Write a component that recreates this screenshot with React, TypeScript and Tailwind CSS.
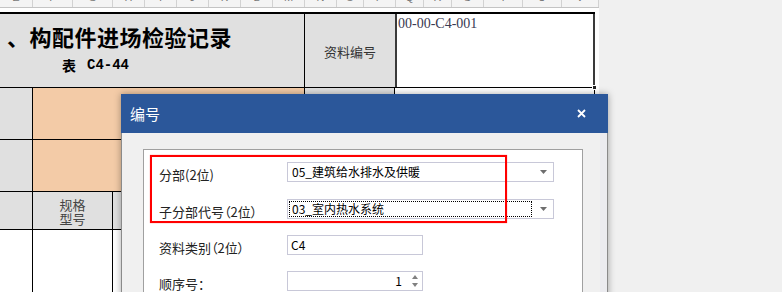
import React from "react";

const cols = [
  { l: "E", w: "w-[33px]" },
  { l: "F", w: "w-[40px]" },
  { l: "G", w: "w-[40px]" },
  { l: "H", w: "w-[32px]" },
  { l: "I", w: "w-[32px]" },
  { l: "J", w: "w-[32px]" },
  { l: "K", w: "w-[32px]" },
  { l: "L", w: "w-[32px]" },
  { l: "M", w: "w-[32px]" },
  { l: "N", w: "w-[32px]" },
  { l: "O", w: "w-[27px]" },
  { l: "P", w: "w-[32px]" },
  { l: "Q", w: "w-[28px]" },
  { l: "R", w: "w-[28px]" },
  { l: "S", w: "w-[32px]" },
  { l: "T", w: "w-[39px]" },
  { l: "U", w: "w-[39px]" },
  { l: "V", w: "w-[37px]" },
];

const cjk = "font-['Noto_Sans_CJK_SC','Noto_Sans',sans-serif]";

function Caret() {
  return (
    <svg width="7" height="4" viewBox="0 0 7 4" className="shrink-0">
      <path d="M0 0h7L3.5 4z" fill="#6e6e6e" />
    </svg>
  );
}

function Combo({ value, focused }: { value: string; focused?: boolean }) {
  return (
    <div className="w-[267px] h-[20px] border border-[#c8c8d8] bg-white flex items-center pl-[1px] pr-[6px]">
      <div
        className={`flex-1 h-[16px] flex items-center pl-[2px] mr-[8px] ${
          focused ? "border border-dotted border-black" : "border border-transparent"
        }`}
      >
        <span className="text-[12px] leading-none text-black">{value}</span>
      </div>
      <Caret />
    </div>
  );
}

function Row({ label, children }: { label: string; children: React.ReactNode }) {
  return (
    <div className="flex items-center h-[20px] shrink-0">
      <span className="w-[128px] pt-[4px] text-[13px] leading-none text-[#222] [font-feature-settings:'palt']">
        {label}
      </span>
      {children}
    </div>
  );
}

export default function App() {
  return (
    <div className={`relative w-[782px] h-[292px] overflow-hidden bg-[#f0f0f0] ${cjk}`}>
      {/* sheet */}
      <div className="w-[599px] h-[292px] bg-white flex flex-col overflow-hidden">
        <div className="flex shrink-0 h-[8px] bg-[#f4f4f4] border-b border-[#c4c4c4] overflow-hidden">
          {cols.map((c) => (
            <div
              key={c.l}
              className={`${c.w} shrink-0 border-r border-[#d2d2d2] text-center text-[11px] leading-[11px] text-[#777] -mt-[8px] font-['Liberation_Sans',sans-serif]`}
            >
              {c.l}
            </div>
          ))}
        </div>
        <div className="h-[4px] shrink-0 bg-white" />

        <div className="w-[595px] shrink-0 border-t-2 border-black flex flex-col">
          {/* title row */}
          <div className="flex shrink-0 h-[74px] border-b border-black">
            <div className="w-[305px] shrink-0 bg-[#e0e0e0] border-r border-black flex flex-col overflow-hidden">
              <div className="mt-[11px] ml-[7px] text-[22px] leading-[22px] font-bold tracking-[0.5px] text-black whitespace-nowrap">
                、构配件进场检验记录
              </div>
              <div className="mt-[10px] ml-[62px] flex items-center h-[15px] font-bold text-black whitespace-nowrap">
                <span className="text-[14px] leading-none">表</span>
                <span className="ml-[11px] text-[14px] leading-none font-['Liberation_Mono',monospace]">C4-44</span>
              </div>
            </div>
            <div className="w-[90px] shrink-0 bg-[#e0e0e0] flex items-center justify-center">
              <span className="text-[13px] leading-none text-[#333] pt-[2px]">资料编号</span>
            </div>
            <div className="relative w-[200px] shrink-0 bg-white border-x-2 border-[#3a3a3a]">
              <div className="pl-[1px] pt-[3px] text-[14px] leading-[14px] text-[#3a3a52] font-['Liberation_Serif',serif]">
                00-00-C4-001
              </div>
              <div className="absolute -right-[4px] -bottom-[3px] w-[5px] h-[5px] bg-[#222] border border-white" />
            </div>
          </div>

          {/* peach rows */}
          {[0, 1].map((i) => (
            <div key={i} className="flex shrink-0 h-[52px] border-b border-black">
              <div className="w-[33px] shrink-0 bg-[#e0e0e0] border-r border-black" />
              <div className="w-[272px] shrink-0 bg-[#f3cba7] border-r border-black" />
              <div className="w-[90px] shrink-0 bg-[#e0e0e0] border-r border-black" />
              <div className="w-[200px] shrink-0 bg-white border-r border-black" />
            </div>
          ))}

          {/* header row */}
          <div className="flex shrink-0 h-[38px] border-b border-black">
            <div className="w-[33px] shrink-0 bg-[#e0e0e0] border-r border-black" />
            <div className="w-[80px] shrink-0 bg-[#e0e0e0] border-r border-black flex flex-col items-center justify-center pt-[2px] text-[13px] leading-[14px] text-[#444]">
              <span>规格</span>
              <span>型号</span>
            </div>
            <div className="flex-1 bg-[#e0e0e0]" />
          </div>

          <div className="flex shrink-0 h-[70px]">
            <div className="w-[33px] shrink-0 border-r border-black" />
            <div className="w-[80px] shrink-0 border-r border-black" />
          </div>
        </div>
      </div>

      {/* dialog */}
      <div className="absolute left-[121px] top-[94px] w-[487px] h-[220px] flex flex-col shadow-[0_0_7px_rgba(0,0,0,0.35)]">
        <div className="h-[39px] shrink-0 bg-[#2b579a] flex items-center justify-between pl-[9px] pr-[22px]">
          <span className="text-[15px] leading-none text-white">编号</span>
          <svg width="9" height="9" viewBox="0 0 9 9">
            <path d="M1 1l7 7M8 1l-7 7" stroke="white" strokeWidth="1.8" />
          </svg>
        </div>
        <div className="flex-1 flex bg-[#f0f0f0] border-x border-[#8a8a8a]">
          <div className="flex-1 pl-[21px] pr-[17px] pt-[16px]">
            <div className="relative h-[200px] bg-white border border-[#a0a0a0] pl-[15px] pt-[12px] flex flex-col">
              <Row label="分部(2位)">
                <Combo value="05_建筑给水排水及供暖" />
              </Row>
              <div className="h-[17px] shrink-0" />
              <Row label="子分部代号（2位）">
                <Combo value="03_室内热水系统" focused />
              </Row>
              <div className="h-[16px] shrink-0" />
              <Row label="资料类别（2位）">
                <div className="w-[136px] h-[20px] border border-[#c8c8d8] bg-white flex items-center pl-[3px]">
                  <span className="text-[12px] leading-none text-black">C4</span>
                </div>
              </Row>
              <div className="h-[16px] shrink-0" />
              <Row label="顺序号：">
                <div className="w-[136px] h-[20px] border border-[#c8c8d8] bg-white flex items-center justify-end pr-[4px]">
                  <span className="text-[12px] leading-none text-black mr-[10px]">1</span>
                  <div className="flex flex-col gap-[4px]">
                    <svg width="6" height="4" viewBox="0 0 6 4">
                      <path d="M0 4h6L3 0z" fill="#808080" />
                    </svg>
                    <svg width="6" height="4" viewBox="0 0 6 4">
                      <path d="M0 0h6L3 4z" fill="#808080" />
                    </svg>
                  </div>
                </div>
              </Row>

              <div className="absolute left-[6px] top-[5px] w-[357px] h-[68px] border-2 border-[#ff0000] shadow-[0_0_1px_#ff7070]" />
            </div>
          </div>
          <div className="w-[7px] bg-[#ebebef]" />
        </div>
      </div>
    </div>
  );
}
